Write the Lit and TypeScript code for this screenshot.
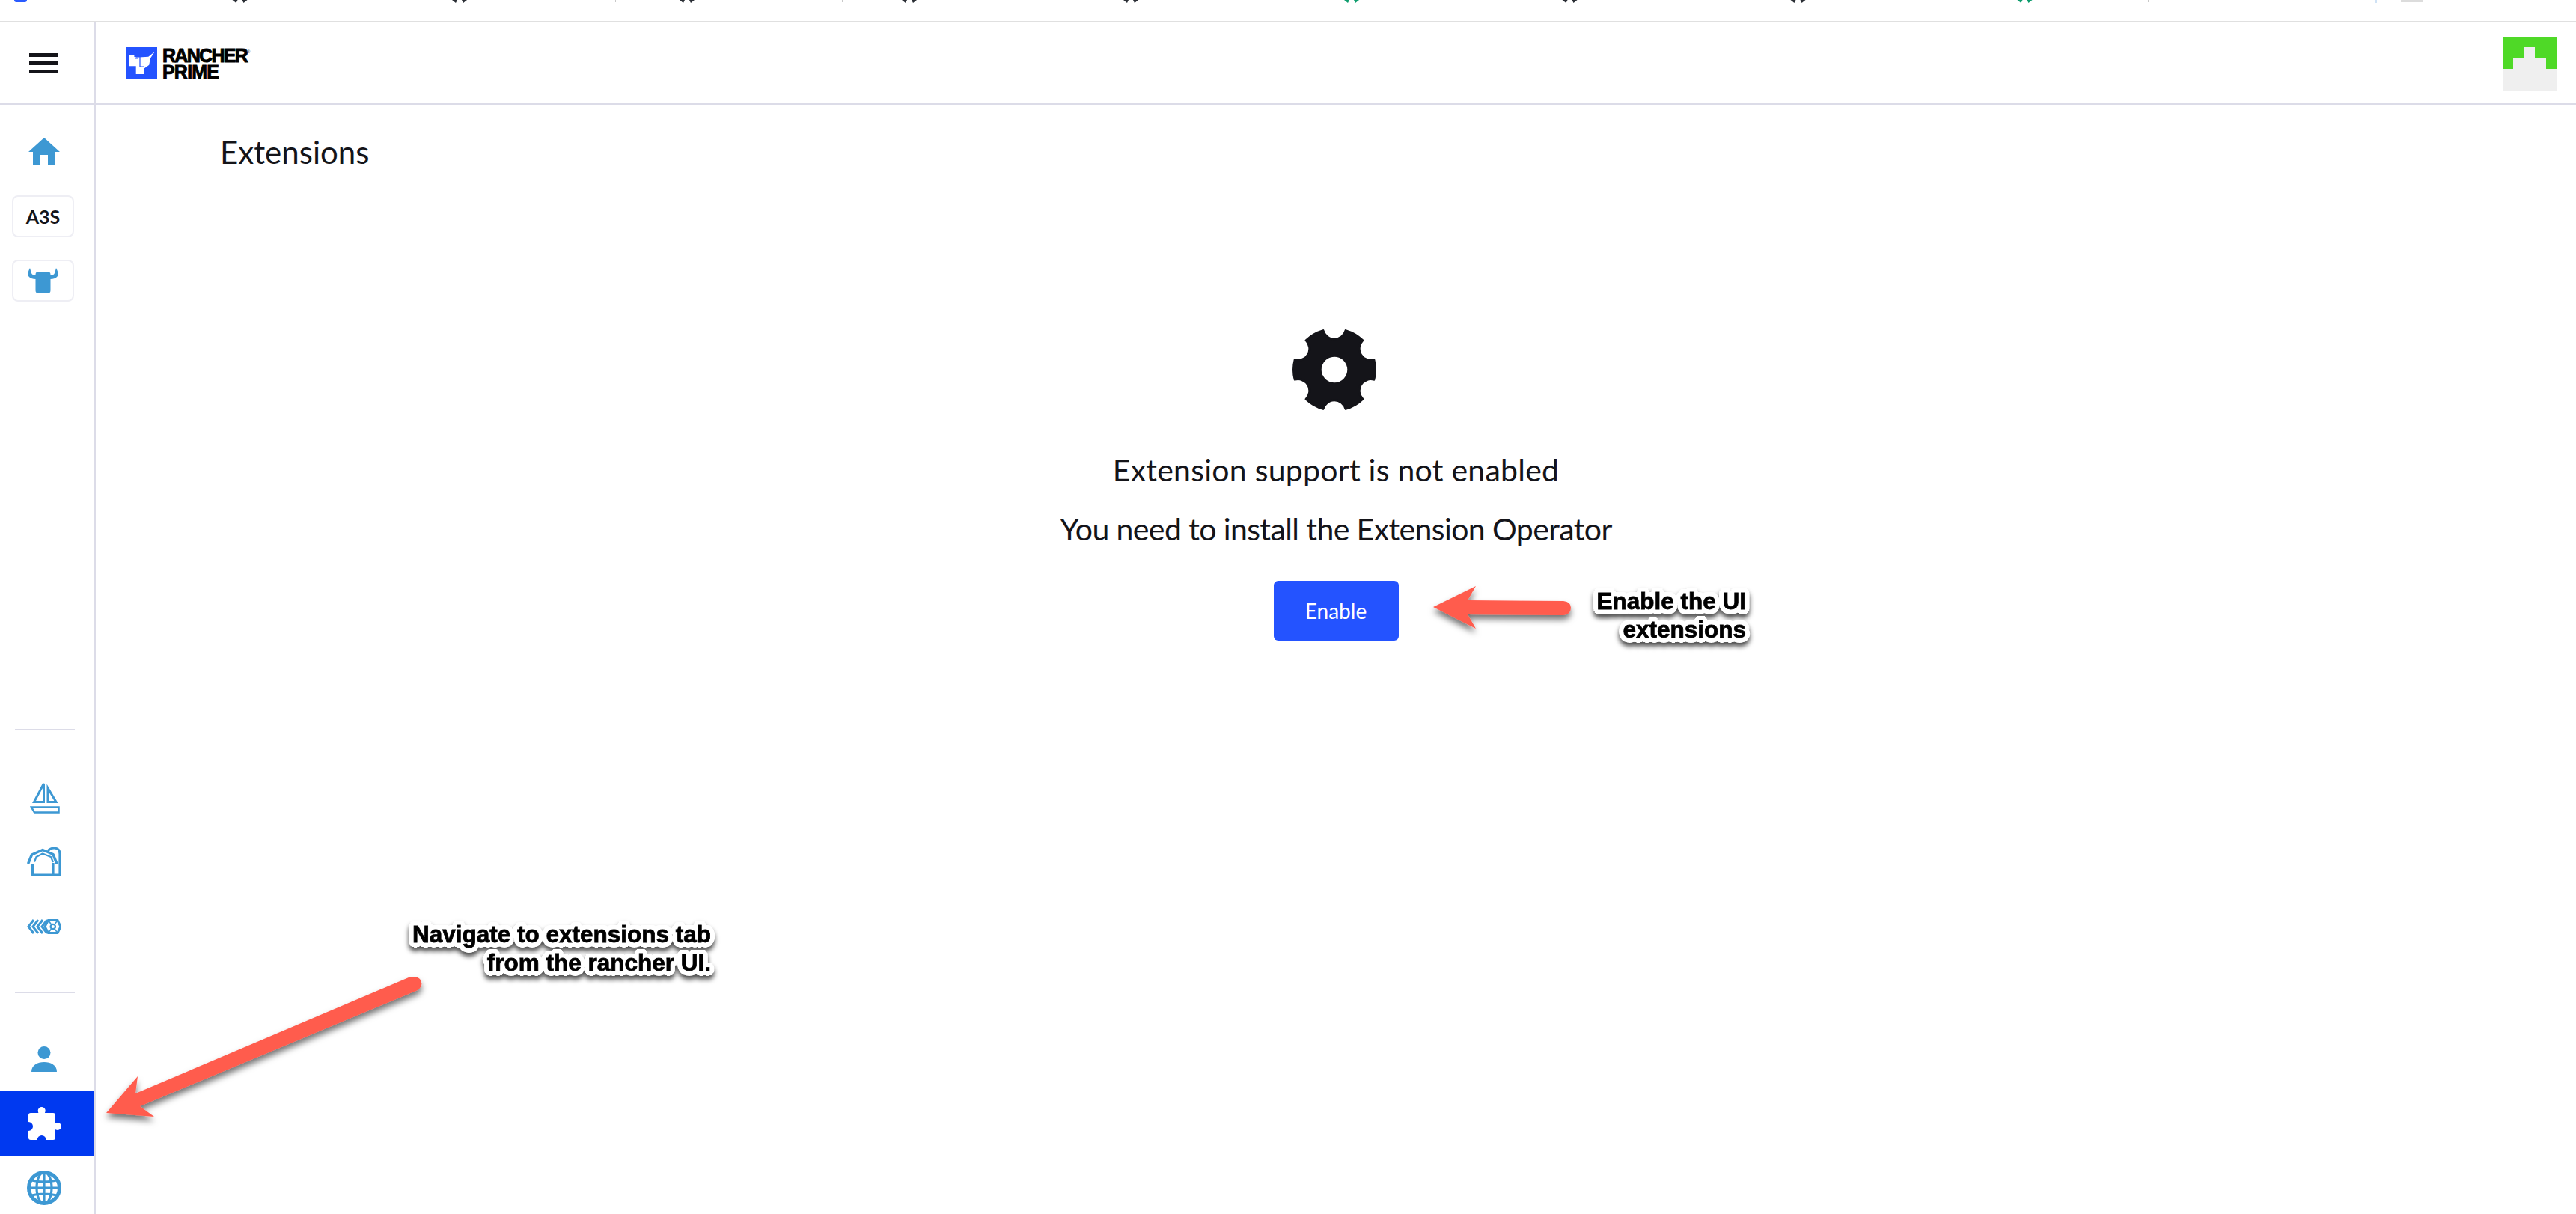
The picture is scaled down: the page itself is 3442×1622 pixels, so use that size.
import { LitElement, html, css, svg, unsafeCSS } from 'lit';
import { customElement } from 'lit/decorators.js';

// clipped tab icons from the browser bar above the app
const TAB_MARKS = [
  { x: 310, w: 21, c: '#2a2e35' },
  { x: 604, w: 20, c: '#2a2e35' },
  { x: 908, w: 20, c: '#2a2e35' },
  { x: 1204, w: 22, c: '#2a2e35' },
  { x: 1500, w: 22, c: '#2a2e35' },
  { x: 1794, w: 24, c: '#0f9d6e' },
  { x: 2087, w: 21, c: '#2a2e35' },
  { x: 2392, w: 21, c: '#2a2e35' },
  { x: 2692, w: 27, c: '#0f9d6e' },
];

const gearPath = () => {
  const R = 54.5;
  const a = (16 * Math.PI) / 180;
  const pt = (t: number) => `${(R * Math.cos(t)).toFixed(2)} ${(R * Math.sin(t)).toFixed(2)}`;
  let d = '';
  for (let k = 0; k < 6; k++) {
    const c = -Math.PI / 2 + (k * Math.PI) / 3;
    d += `${k === 0 ? 'M' : `A${R} ${R} 0 0 1`} ${pt(c - a)} A15.5 15.5 0 0 0 ${pt(c + a)} `;
  }
  d += `A${R} ${R} 0 0 1 ${pt(-Math.PI / 2 - a)} Z`;
  return d;
};

// white sticker outline behind the annotation text
const outline = () => {
  const parts: string[] = [];
  for (const [r, n] of [[6.5, 24], [3.5, 12]]) {
    for (let i = 0; i < n; i++) {
      const t = (i / n) * Math.PI * 2;
      parts.push(`${(r * Math.cos(t)).toFixed(1)}px ${(r * Math.sin(t)).toFixed(1)}px 0 #fff`);
    }
  }
  return unsafeCSS(parts.join(', '));
};

@customElement('app-root')
export class AppRoot extends LitElement {
  static styles = css`
    :host {
      display: block;
      position: relative;
      width: 3442px;
      height: 1622px;
      overflow: hidden;
      background: #fff;
      font-family: 'Lato', 'Liberation Sans', sans-serif;
      color: #141419;
    }

    .browser-strip {
      position: relative;
      height: 28px;
      border-bottom: 2px solid #e0e0e0;
      overflow: hidden;
    }
    .mark {
      position: absolute;
      top: 0;
      display: block;
    }
    .tab-blue {
      left: 19px;
      width: 17px;
      height: 3px;
      border-radius: 0 0 3px 3px;
      background: #2a5bff;
    }
    .tab-tick {
      left: 822px;
      width: 1px;
      height: 3px;
      background: #c8c8c8;
    }
    .tab-tick.b {
      left: 1125px;
    }
    .tab-tick.c {
      left: 2870px;
    }
    .tab-tick.d {
      left: 3174px;
      width: 2px;
      height: 4px;
      background: #cfe2f5;
    }
    .tab-gray {
      left: 3208px;
      width: 29px;
      height: 3px;
      background: #dcdcdc;
    }

    .header {
      display: flex;
      height: 108px;
      border-bottom: 2px solid #dcdce8;
    }
    .menu {
      flex: none;
      border-right: 2px solid #dcdce8;
      display: flex;
      flex-direction: column;
      align-items: flex-start;
      gap: 6.5px;
      padding: 41px 0 0 39px;
      width: 87px;
    }
    .menu i {
      display: block;
      width: 38px;
      height: 4.5px;
      background: #141419;
    }
    .logo {
      display: flex;
      gap: 7px;
      margin: 33px 0 0 40px;
      height: 42px;
    }
    .logo-text {
      font-family: 'Liberation Sans', sans-serif;
      font-weight: 700;
      font-size: 25px;
      line-height: 22px;
      letter-spacing: -1.7px;
      color: #000;
      -webkit-text-stroke: 0.9px #000;
    }
    .logo-text span {
      display: block;
    }
    .logo-text span.prime {
      letter-spacing: -0.8px;
    }
    .logo-text sup {
      font-size: 6px;
      line-height: 0;
      letter-spacing: 0;
      -webkit-text-stroke: 0;
      vertical-align: 12px;
      color: #777;
    }
    .avatar {
      margin: 19px 26px 0 auto;
      display: block;
    }

    .body {
      display: flex;
      height: 1482px;
    }
    .sidebar {
      width: 126px;
      flex: none;
      border-right: 2px solid #dcdce8;
      display: flex;
      flex-direction: column;
      padding-top: 42px;
      height: 1440px;
      color: #3d98d3;
    }
    .slot {
      display: flex;
      align-items: center;
      justify-content: center;
      height: 86px;
      flex: none;
      padding-right: 8px;
    }
    .slot.home {
      height: 40px;
    }
    .slot.tall {
      height: 87px;
    }
    .slot.active {
      background: #0039f0;
      color: #fff;
      padding-right: 6px;
    }
    .slot.globe {
      height: 78px;
      align-items: flex-start;
      padding-top: 20px;
      box-sizing: border-box;
    }
    .card {
      width: 83px;
      height: 56px;
      margin: 30px 0 0 16px;
      box-sizing: border-box;
      border: 2px solid #eeeef4;
      border-radius: 8px;
      display: flex;
      align-items: center;
      justify-content: center;
      flex: none;
      font-size: 25px;
      font-weight: 700;
      color: #141419;
    }
    .card.first {
      margin-top: 39px;
    }
    .spacer {
      flex: 1;
    }
    .divider {
      flex: none;
      height: 2px;
      width: 80px;
      margin: 0 0 44px 20px;
      background: #dcdce8;
    }
    .divider.second {
      margin-bottom: 45px;
      margin-top: 44px;
    }

    .main {
      flex: 1;
      padding-top: 39px;
    }
    .title {
      margin: 0;
      padding-left: 166px;
      font-size: 42px;
      font-weight: 400;
      line-height: 49px;
    }
    .empty {
      display: flex;
      flex-direction: column;
      align-items: center;
      padding-top: 208px;
    }
    .gear {
      display: block;
      margin-right: 5px;
    }
    .msg {
      margin: 0;
      font-size: 41px;
      font-weight: 400;
      line-height: 50px;
    }
    .msg.one {
      margin-top: 51px;
      letter-spacing: 0.25px;
    }
    .msg.two {
      margin-top: 29px;
      letter-spacing: -0.6px;
    }
    .enable {
      margin-top: 44px;
      width: 167px;
      height: 80px;
      border: 0;
      border-radius: 6px;
      background: #2453ff;
      color: #fff;
      font-family: inherit;
      font-size: 28px;
    }

    .arrows {
      position: absolute;
      left: 0;
      top: 0;
      pointer-events: none;
    }
    .note {
      position: absolute;
      font-family: 'Liberation Sans', sans-serif;
      font-weight: 700;
      font-size: 31.5px;
      line-height: 38px;
      text-align: right;
      white-space: nowrap;
      color: #000;
      -webkit-text-stroke: 0.8px #000;
      filter: drop-shadow(0 5px 3px rgba(0, 0, 0, 0.7));
      text-shadow: ${outline()};
    }
    .note.enable-note {
      right: 1109px;
      top: 784px;
    }
    .note.nav-note {
      right: 2492px;
      top: 1229px;
    }
  `;

  private _tabMark(x: number, w: number, c: string) {
    return html`<svg class="mark" style="left:${x}px" width=${w} height="4" viewBox="0 0 20 4">
      <path d="M0 0H7L5 4ZM13 0H20L15 4Z" fill=${c} />
    </svg>`;
  }

  private _sidebar() {
    return html`
      <nav class="sidebar">
        <div class="slot home">
          <svg width="42" height="36" viewBox="0 0 42 36" fill="currentColor">
            <path d="M21 0L42 19H36V36H26V23H16V36H6V19H0Z" />
          </svg>
        </div>
        <div class="card first">A3S</div>
        <div class="card">
          <svg width="41" height="34" viewBox="0 0 41 34" fill="#3d98d3">
            <rect x="10.5" y="5" width="20" height="29" rx="4" />
            <path d="M3 0Q-1 8 1 11Q4 15 11 15V10Q6 10 5 7Q4 4 3 0Z" />
            <path d="M38 0Q42 8 40 11Q37 15 30 15V10Q35 10 36 7Q37 4 38 0Z" />
          </svg>
        </div>
        <div class="spacer"></div>
        <div class="divider"></div>
        <div class="slot tall">
          <svg width="41" height="46" viewBox="0 0 41 46" fill="none" stroke="currentColor" stroke-width="3">
            <path d="M19.5 6V30.5H6.5Z" />
            <path d="M25 12V30.5H36Z" />
            <path d="M3 37.5H39.5V44.5H7Z" stroke-width="2.5" />
          </svg>
        </div>
        <div class="slot tall">
          <svg width="46" height="40" viewBox="0 0 46 40" fill="none" stroke="currentColor" stroke-linejoin="round">
            <path d="M2 22L6.5 11L21 4.5L35 10.5L39.5 22" stroke-width="3.5" stroke-linecap="round" />
            <path d="M7.5 23V38H44V10Q44 2 36.5 2Q31 2 28 6" stroke-width="3.2" />
            <path d="M35 22V37" stroke-width="3.2" />
            <path d="M10 20.5L12.5 14L21 9.5L32 14L35 21" stroke-width="2.2" />
          </svg>
        </div>
        <div class="slot tall">
          <svg width="46" height="20" viewBox="0 0 46 20" fill="none" stroke="currentColor" stroke-width="3">
            <path d="M9 1L2 10L9 19M15 1L8 10L15 19M21 1L14 10L21 19M27 1L20 10L27 19" />
            <path d="M28.5 1.5H41L45 10L41 18.5H28.5L24 10Z" fill="#fff" />
            <circle cx="34.8" cy="10" r="3.2" stroke-width="2.2" />
            <path d="M28.5 1.5L32.5 7M41 1.5L37 7M28.5 18.5L32.5 13M41 18.5L37 13" stroke-width="1.6" />
          </svg>
        </div>
        <div class="divider second"></div>
        <div class="slot">
          <svg width="34" height="34" viewBox="0 0 34 34" fill="currentColor">
            <circle cx="17" cy="8.5" r="8.5" />
            <path d="M0 34C0 25 8 21 17 21C26 21 34 25 34 34Z" />
          </svg>
        </div>
        <div class="slot active">
          <svg width="44" height="44" viewBox="0 0 44 44" fill="#fff">
            <rect x="0" y="8" width="36" height="36" rx="3" />
            <circle cx="17.7" cy="5" r="5" />
            <rect x="13.5" y="5" width="8.4" height="6" />
            <circle cx="39" cy="26" r="5" />
            <rect x="34" y="21.8" width="5" height="8.4" />
            <circle cx="0" cy="26" r="6" fill="#0039f0" />
            <circle cx="17.7" cy="44" r="6" fill="#0039f0" />
          </svg>
        </div>
        <div class="slot globe">
          <svg width="46" height="46" viewBox="0 0 46 46" fill="none" stroke="#3d98d3" stroke-width="3.2">
            <circle cx="23" cy="23" r="20.5" fill="#fff" stroke-width="5" />
            <ellipse cx="23" cy="23" rx="10" ry="21" />
            <path d="M23 2V44M2 23H44M6 13Q23 17 40 13M6 33Q23 29 40 33" />
          </svg>
        </div>
      </nav>
    `;
  }

  render() {
    return html`
      <div class="browser-strip">
        <span class="mark tab-blue"></span>
        ${TAB_MARKS.map((m) => this._tabMark(m.x, m.w, m.c))}
        <span class="mark tab-tick"></span>
        <span class="mark tab-tick b"></span>
        <span class="mark tab-tick c"></span>
        <span class="mark tab-tick d"></span>
        <span class="mark tab-gray"></span>
      </div>

      <header class="header">
        <div class="menu"><i></i><i></i><i></i></div>
        <div class="logo">
          <svg width="42" height="42" viewBox="0 0 42 42">
            <rect width="42" height="42" fill="#2453ff" />
            <path
              fill="#fff"
              d="M4.7 10.3H12L13.7 13.7L30.3 12.7L38.7 6L32.7 15.3L31.3 23.7L25.3 28H24.3V36H13.7V25.3H4.7Z"
            />
            <path d="M12 6V12.5H19V26H24M12 15H16" stroke="#2453ff" stroke-width="1.2" fill="none" />
          </svg>
          <div class="logo-text"><span>RANCHER<sup>®</sup></span><span class="prime">PRIME</span></div>
        </div>
        <svg class="avatar" width="72" height="72" viewBox="0 0 5 5" shape-rendering="crispEdges">
          <rect width="5" height="5" fill="#4fd927" />
          <rect y="3" width="5" height="2" fill="#efefef" />
          <rect x="1" y="2" width="3" height="1" fill="#efefef" />
          <rect x="2" y="1" width="1" height="1" fill="#efefef" />
        </svg>
      </header>

      <div class="body">
        ${this._sidebar()}
        <main class="main">
          <h1 class="title">Extensions</h1>
          <section class="empty">
            <svg class="gear" width="116" height="116" viewBox="-58 -58 116 116">
              <path d=${gearPath()} fill="#141419" stroke="#141419" stroke-width="3" stroke-linejoin="round" />
              <circle r="17.3" fill="#fff" />
            </svg>
            <p class="msg one">Extension support is not enabled</p>
            <p class="msg two">You need to install the Extension Operator</p>
            <button class="enable">Enable</button>
          </section>
        </main>
      </div>

      <svg class="arrows" width="3442" height="1622" viewBox="0 0 3442 1622">
        <defs>
          <filter id="arrow-shadow" x="-20%" y="-40%" width="140%" height="200%">
            <feDropShadow dx="0" dy="6" stdDeviation="4" flood-color="#000" flood-opacity="0.55" />
          </filter>
        </defs>
        <g fill="#ff5b4d" filter="url(#arrow-shadow)">
          ${svg`<path d="M1915 811L1972 783L1961 802L2089 803Q2099 804 2099 812Q2099 821 2089 822L1961 821L1972 840Z" />`}
          ${svg`<path d="M142 1487L184 1438L181 1461L546 1306Q556 1303 561 1308Q567 1316 558 1323L187 1478L206 1492Z" />`}
        </g>
      </svg>

      <div class="note enable-note">Enable the UI<br />extensions</div>
      <div class="note nav-note">Navigate to extensions tab<br />from the rancher UI.</div>
    `;
  }
}

declare global {
  interface HTMLElementTagNameMap {
    'app-root': AppRoot;
  }
}
